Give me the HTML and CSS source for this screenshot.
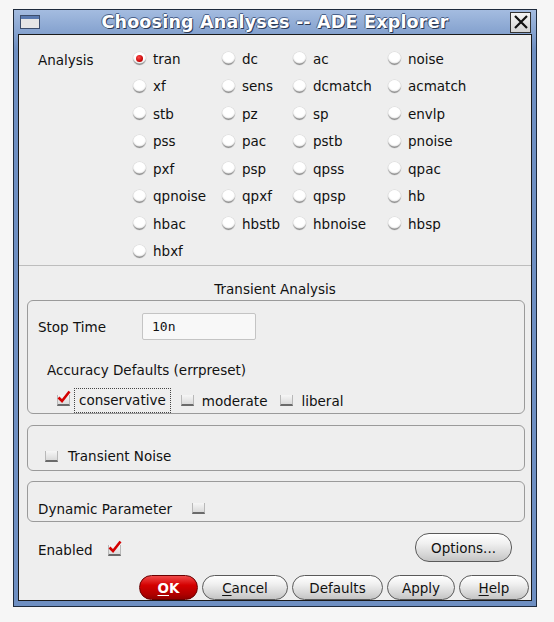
FILE: index.html
```html
<!DOCTYPE html>
<html>
<head>
<meta charset="utf-8">
<link rel="stylesheet" href="styles.css">
</head>
<body>
<div class="window">
  <div class="titlebar">
    <span class="winicon"></span>
    <span class="title">Choosing Analyses -- ADE Explorer</span>
    <span class="closebtn"><svg width="18" height="18" viewBox="0 0 18 18"><path d="M3 3 L15 15 M15 3 L3 15" stroke="#111" stroke-width="2.2" fill="none"/></svg></span>
  </div>
  <div class="content">
    <div class="analysis">
      <div class="alabel">Analysis</div>
      <div class="radios">
        <label class="opt"><span class="radio on"></span>tran</label>
        <label class="opt"><span class="radio"></span>dc</label>
        <label class="opt"><span class="radio"></span>ac</label>
        <label class="opt"><span class="radio"></span>noise</label>
        <label class="opt"><span class="radio"></span>xf</label>
        <label class="opt"><span class="radio"></span>sens</label>
        <label class="opt"><span class="radio"></span>dcmatch</label>
        <label class="opt"><span class="radio"></span>acmatch</label>
        <label class="opt"><span class="radio"></span>stb</label>
        <label class="opt"><span class="radio"></span>pz</label>
        <label class="opt"><span class="radio"></span>sp</label>
        <label class="opt"><span class="radio"></span>envlp</label>
        <label class="opt"><span class="radio"></span>pss</label>
        <label class="opt"><span class="radio"></span>pac</label>
        <label class="opt"><span class="radio"></span>pstb</label>
        <label class="opt"><span class="radio"></span>pnoise</label>
        <label class="opt"><span class="radio"></span>pxf</label>
        <label class="opt"><span class="radio"></span>psp</label>
        <label class="opt"><span class="radio"></span>qpss</label>
        <label class="opt"><span class="radio"></span>qpac</label>
        <label class="opt"><span class="radio"></span>qpnoise</label>
        <label class="opt"><span class="radio"></span>qpxf</label>
        <label class="opt"><span class="radio"></span>qpsp</label>
        <label class="opt"><span class="radio"></span>hb</label>
        <label class="opt"><span class="radio"></span>hbac</label>
        <label class="opt"><span class="radio"></span>hbstb</label>
        <label class="opt"><span class="radio"></span>hbnoise</label>
        <label class="opt"><span class="radio"></span>hbsp</label>
        <label class="opt"><span class="radio"></span>hbxf</label>
      </div>
    </div>
    <div class="heading">Transient Analysis</div>
    <div class="group g1">
      <div class="stoprow">
        <span class="stoplabel">Stop Time</span>
        <span class="input">10n</span>
      </div>
      <div class="acclabel">Accuracy Defaults (errpreset)</div>
      <div class="accrow">
        <span class="check on"><svg width="14" height="14" viewBox="0 0 14 14"><path d="M1.5 7.5 L5 11 L12.5 1.5" stroke="#d40000" stroke-width="2.6" fill="none"/></svg></span>
        <span class="focus">conservative</span>
        <span class="check c2"></span><span class="clabel">moderate</span>
        <span class="check c3"></span><span class="clabel">liberal</span>
      </div>
    </div>
    <div class="group g2">
      <span class="check"></span><span class="noise">Transient Noise</span>
    </div>
    <div class="group g3">
      <span>Dynamic Parameter</span><span class="check dyn"></span>
    </div>
    <div class="enabledrow">
      <div class="enabled">
        <span>Enabled</span>
        <span class="check on en"><svg width="14" height="14" viewBox="0 0 14 14"><path d="M1.5 7.5 L5 11 L12.5 1.5" stroke="#d40000" stroke-width="2.6" fill="none"/></svg></span>
      </div>
      <button class="btn options">Options...</button>
    </div>
    <div class="buttons">
      <button class="btn ok"><u>O</u>K</button>
      <button class="btn cancel"><u>C</u>ancel</button>
      <button class="btn defaults">Defaults</button>
      <button class="btn apply">Apply</button>
      <button class="btn help"><u>H</u>elp</button>
    </div>
  </div>
</div>
</body>
</html>
```
FILE: styles.css
```css
* { box-sizing: border-box; }
html, body { margin: 0; padding: 0; }
body {
  background: #f6f6f6;
  font-family: "DejaVu Sans", sans-serif;
  font-size: 13.5px;
  color: #111;
}
.window {
  margin: 9px 0 0 13px;
  width: 524px;
  border: 1px solid #1e2a3c;
  background: linear-gradient(#a4bce0, #6e8fc2 40px, #6e8fc2);
  padding: 0 4px 5px 4px;
}
.titlebar {
  height: 24px;
  display: flex;
  align-items: center;
  position: relative;
}
.winicon {
  width: 20px;
  height: 14px;
  margin-left: 2px;
  border: 1px solid #3c4e6c;
  background: linear-gradient(#5a7ab0 0 3px, #e6e6e6 3px);
}
.title {
  flex: 1;
  text-align: center;
  font-weight: bold;
  font-size: 17.5px;
  color: #fff;
  text-shadow: 1px 1px 0 #2b3a55, -1px 0 0 #4a618a, 0 -1px 0 #4a618a;
  letter-spacing: 0.2px;
}
.closebtn {
  width: 21px;
  height: 21px;
  border: 1px solid #333;
  background: linear-gradient(#f4f4f4, #d4d4d4);
  display: flex;
  align-items: center;
  justify-content: center;
  margin-right: 1px;
}
.content {
  border: 1px solid #1a1a1a;
  background: #eeeeee;
  padding-bottom: 0;
}
.analysis {
  display: flex;
  padding: 10px 0 0 19px;
  border-bottom: 1px solid #bdbdbd;
}
.alabel {
  width: 95px;
  padding-top: 7px;
}
.radios {
  display: grid;
  grid-template-columns: 89px 71px 95px 1fr;
  grid-auto-rows: 27.5px;
}
.opt {
  display: flex;
  align-items: center;
  gap: 7px;
}
.radio {
  width: 13px;
  height: 13px;
  border-radius: 50%;
  background: radial-gradient(circle at 50% 35%, #ffffff 0 45%, #f0f0f0 70%);
  box-shadow: inset 0 -2px 1px -0.5px #8d8d8d, 0 0 0 0.5px #d6d6d6;
  position: relative;
  flex: none;
}
.radio.on::after {
  content: "";
  position: absolute;
  left: 3px;
  top: 3px;
  width: 7px;
  height: 7px;
  border-radius: 50%;
  background: radial-gradient(circle at 40% 35%, #ff4a4a, #c00000 70%);
}
.heading {
  text-align: center;
  line-height: 16px;
  margin: 15px 0 3px 0;
}
.group {
  margin: 0 6px 0 8px;
  border: 1px solid #9a9a9a;
  border-radius: 6px;
}
.g1 {
  padding: 12px 0 0 10px;
}
.stoprow {
  display: flex;
  align-items: center;
  height: 27px;
}
.stoplabel {
  width: 104px;
}
.input {
  width: 114px;
  height: 27px;
  border: 1px solid #c4c4c4;
  border-radius: 2px;
  background: #f8f8f8;
  font-family: "DejaVu Sans Mono", monospace;
  font-size: 13px;
  padding: 5px 0 0 9px;
}
.acclabel {
  margin: 22px 0 0 9px;
  line-height: 16px;
}
.accrow {
  margin: 10px 0 0 19px;
  display: flex;
  align-items: center;
  height: 25px;
}
.check {
  width: 13px;
  height: 11px;
  background: linear-gradient(#f6f6f6, #dadada);
  border-left: 1px solid #b8b8b8;
  border-right: 1px solid #b8b8b8;
  border-bottom: 2px solid #6a6a6a;
  position: relative;
  flex: none;
  display: inline-block;
}
.check svg {
  position: absolute;
  left: -1px;
  top: -5px;
}
.focus {
  margin-left: 4px;
  height: 25px;
  border: 1px dotted #444;
  padding: 3px 4px 0 4px;
}
.c2 { margin-left: 10px; }
.c3 { margin-left: 13px; }
.clabel { margin-left: 8px; }
.g2 {
  margin-top: 11px;
  height: 46px;
  display: flex;
  align-items: center;
  padding: 16px 0 0 17px;
}
.noise { margin-left: 10px; }
.g3 {
  margin-top: 10px;
  height: 41px;
  display: flex;
  align-items: center;
  padding: 14px 0 0 10px;
}
.dyn { margin-left: 20px; }
.enabledrow {
  display: flex;
  justify-content: space-between;
  align-items: center;
  margin: 11px 19px 0 19px;
  height: 29px;
}
.enabled {
  display: flex;
  align-items: center;
  padding-top: 5px;
}
.en { margin-left: 15px; }
.btn {
  font-family: "DejaVu Sans", sans-serif;
  font-size: 13.5px;
  color: #111;
  border: 1px solid #5a5a5a;
  border-radius: 13px;
  background: linear-gradient(#ffffff, #f0f0f0 35%, #d6d6d6 75%, #c4c4c4);
  padding: 0;
  height: 25px;
}
.btn u { text-underline-offset: 2px; }
.options {
  width: 97px;
  height: 29px;
  border-radius: 14px;
}
.buttons {
  display: flex;
  justify-content: flex-end;
  gap: 4px;
  margin: 13px 2px 0 0;
  padding-bottom: 0;
}
.ok {
  width: 59px;
  color: #fff;
  font-weight: bold;
  background: linear-gradient(#f04a4a, #d40000 40%, #b00000 80%, #900000);
  border-color: #6a0000;
}
.cancel { width: 86px; }
.defaults { width: 91px; }
.apply { width: 68px; }
.help { width: 70px; }
```
